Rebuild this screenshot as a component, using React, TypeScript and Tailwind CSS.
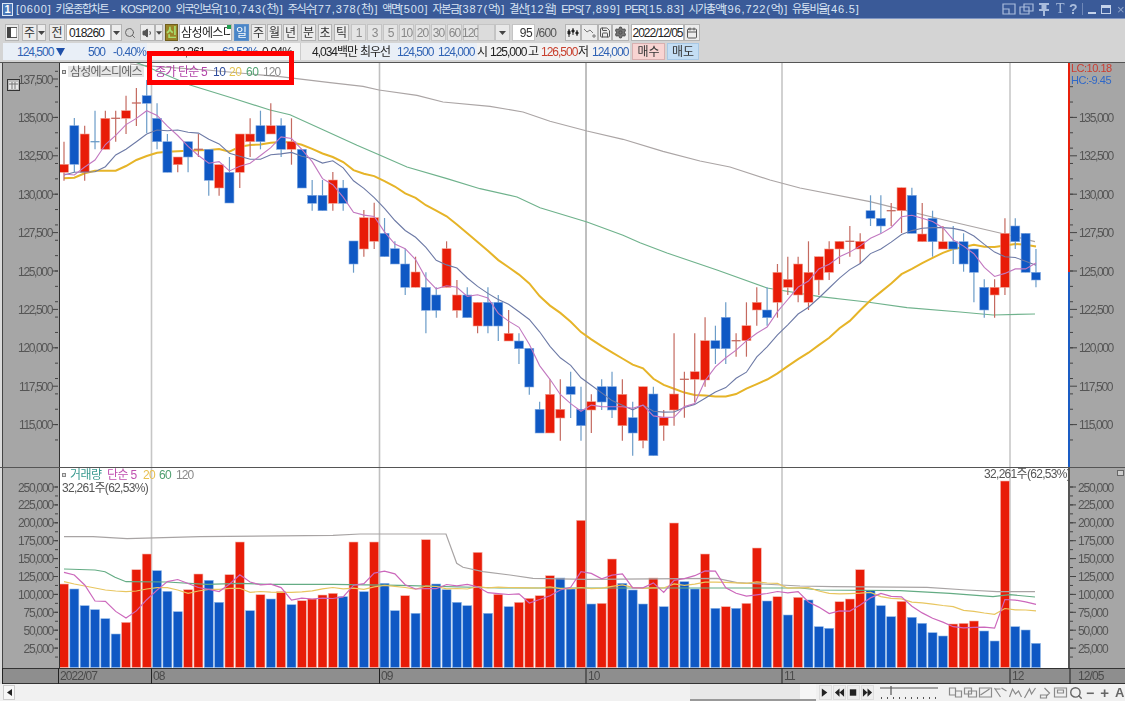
import React from "react";
import { Search, Save, Settings, Calendar, Volume1 } from "lucide-react";

type C = "r" | "b";
// colour, body top, body bottom, wick top, wick bottom (page pixels)
const candles: [C, number, number, number, number][] = [
  ["r",164.3,172.3,141.7,180.7],["b",125.7,164.3,118,172],["r",134,172.3,125.7,180.7],["b",141.7,141.7,110.7,149.3],["r",118.3,149.3,110.7,149.3],
  ["r",118.3,118.3,110.7,141.7],["r",110.7,118.3,95.7,134],["r",103,103,88,126],["b",95.7,103.3,80,133],["b",118.3,141.7,103.3,149.3],
  ["b",141.7,172.3,134,172.3],["r",157,164.7,157,172.3],["b",141.7,157,141.7,172.3],["r",149.3,149.3,134,157],["b",149.3,180.3,149.3,195.7],
  ["r",164.7,188,164.7,195.7],["b",172.3,203,157,203],["r",134,172.3,134,188],["r",134,141.7,118.3,157],["b",125.7,141.7,110.7,149.3],
  ["r",125.7,134,103.3,134],["b",125.7,149.3,118.3,157],["r",141.7,149.3,118.3,164.7],["b",149.3,188,149.3,188],["b",195.3,203.3,180,210.7],
  ["b",195.3,210.7,180,210.7],["r",180,203.3,172,210.7],["b",188,203.3,180,210.7],["b",241,264,241,272.7],["r",217.7,249,210,256.7],
  ["r",217.7,241.3,202.7,249],["b",233.3,256.7,218,256.7],["b",248.7,264,241.3,264],["b",264,287.3,248.7,295],["r",272,287.3,256.7,287.3],
  ["b",287.3,310.3,272.3,333.3],["b",295,310.3,287.3,317.7],["r",248.7,287.3,241.3,287.3],["r",295,310.3,280,317.7],["b",295,317.7,287.3,317.7],
  ["r",302.3,326,302.3,333.3],["b",302.3,326,287.3,333.3],["b",302.3,326,295,341],["r",333.3,341,310,341],["b",341,348.7,333.3,364],
  ["b",348.3,387,348.3,394.7],["b",409.3,433,401.7,433],["r",394.3,433,379.3,433],["r",409.3,418,379.3,440.7],["b",386.7,394.3,371.7,418],
  ["b",409.3,425.7,386.7,440.7],["r",401.7,410,394.3,433],["b",386.7,402,379.3,410],["b",386.7,410,371.7,418],["r",394.3,425.7,379.3,440.7],
  ["b",417.7,433,401.7,455.7],["r",386.7,440.7,386.7,448.3],["b",394,455.7,386.7,455.7],["r",417.3,425.7,410,440.7],["r",394,410,333.3,425.7],
  ["r",379.3,379.3,371.7,417.7],["r",371.7,379.3,333.3,402.3],["r",340.7,380,317.3,386.7],["b",340.7,348.7,325.7,364],["b",317.3,348.7,302.3,364],
  ["r",340.7,340.7,333.3,356.7],["r",325.7,340.7,302.3,356.7],["r",302.3,310,287.3,325.7],["b",310,317.7,287.3,325.7],["r",272.3,302.3,264,317.7],
  ["r",279.3,287.3,256.7,295],["r",264,295,256.7,302.3],["r",272.3,302.3,241.3,310],["r",256.7,280,256.7,295],["r",249,272.3,241.3,280],
  ["r",241.3,249,241.3,264],["r",241.3,241.3,226,256.7],["r",241.3,249,233.3,264],["b",210.7,218.3,195.3,226],["b",218.3,226,195.3,233.3],
  ["r",210.7,210.7,203,226],["r",187.7,210.7,187.7,233],["b",195.3,233.3,187.7,233.3],["r",234,241.7,203,241.7],["b",218.3,241.7,210.7,256.7],
  ["r",241.7,249,226,249],["b",241.7,249,226,264],["b",241.7,264,233.3,271.7],["b",249,272.3,249,302.3],["b",287.3,310,279.3,317.7],
  ["r",287.3,295,279.3,317.7],["r",233.3,287.3,218.3,295],["b",226,241.7,218.3,249],["b",233.3,272.3,233.3,272.3],["b",272.3,280,249,287.3],
];

const volume: [C, number][] = [
  ["r",584],["b",589],["b",605.7],["b",609.7],["b",618.7],["b",634],["r",622.3],["r",569.7],["r",554],["b",570.7],
  ["b",591.3],["b",611.7],["r",589.7],["r",574],["b",580.3],["b",602.3],["r",574.7],["r",542],["b",610.7],["r",594.7],
  ["b",599],["r",591.7],["b",604.7],["r",600.7],["r",599],["r",595],["r",593.3],["b",596.7],["r",542],["b",591.7],
  ["r",542],["b",583.3],["b",610.7],["r",595.7],["b",613.3],["r",539.7],["b",584],["b",589.7],["b",602.3],["b",605.7],
  ["r",552.3],["b",613.3],["r",594.3],["b",606.7],["r",602.3],["r",598.3],["r",595.7],["r",575.7],["b",578],["b",589],
  ["r",520.3],["b",604],["r",603.3],["r",559],["b",583.3],["b",590],["b",604],["r",578],["b",606.7],["r",523],
  ["b",581.7],["b",589],["r",554],["b",608.3],["r",606.7],["b",608.3],["r",603.3],["r",548],["b",601],["r",596.7],
  ["b",615],["r",597.3],["b",600],["b",626.7],["b",628.3],["r",601.7],["r",599],["r",569.7],["b",590.7],["b",605.7],
  ["b",616.7],["r",601.3],["b",617.3],["b",623.3],["b",632.7],["b",636],["r",624],["r",623.3],["r",621],["b",631],
  ["b",641],["r",481],["b",626.7],["b",630],["b",643.3],
];

const X = (i: number) => 64 + 10.34 * i;
const sma = (v: number[], n: number, early: number[]) =>
  v.map((_, i) => (i < n - 1 ? early[i] : v.slice(i - n + 1, i + 1).reduce((a, b) => a + b, 0) / n));
const line = (ys: number[]) => ys.map((y, i) => `${X(i).toFixed(1)},${y.toFixed(1)}`).join(" ");

const closes = candles.map((c) => (c[0] === "r" ? c[1] : c[2]));
const ma5 = sma(closes, 5, [174, 175, 167, 160]);
const ma10 = sma(closes, 10, [175, 172.3, 172, 171.7, 166.7, 155, 149.3, 141.7, 134]);
const ma20 = sma(closes, 20, [178.3,177.7,173.3,170.7,170.7,170.7,166,160,156,152.7,151.7,151.2,150.7,150.3,150,149,151.7,146.7,145]);
const ma60 = "135,62 147,66.7 190,85 233,98.3 270,110 290,114.7 323,129.7 357,145.3 379,154.7 407,167 447,178.7 480,188.7 517,197 540,207.7 587,222 623,235.3 640,242.7 667,253 717,270 767,288 820,296.7 867,302 907,307.7 960,312 993,315 1035,314";
const ma120 = "130,64 157,66.7 207,70 280,76.7 330,82.7 363,86.3 379,90 417,95.3 443,102 490,106.3 523,112 550,121.3 587,131 623,139.3 663,151.3 700,161 730,167 770,180 800,188 870,201.7 940,219 1000,233 1035,241.7";

const volTops = volume.map((v) => v[1]);
const v5 = sma(volTops, 5, [572.3, 575, 585, 601]);
const v20 = sma(volTops, 20, [581.7,584,586,588,590,591,591.7,591,589,587.7,587.7,590,593.3,591,589.3,589.3,588.3,588.3,592.3]);
const v60 = "64,569 95,570 105,571.7 115,577.3 126,581.7 167,582 207,584.3 240,583.3 267,584.3 333,584.3 400,585.3 500,588 800,588 820,590 900,590.7 950,593.3 993,596.7 1010,594.7 1035,597";
const v120 = "64,536.7 93,536.7 127,538.7 200,536.7 333,535.3 360,534 446,534 456.7,563.3 463,567.3 483,571.7 510,575 533,578.3 587,579.3 717,578.3 737,582.7 800,586 833,586.7 927,587.3 967,590 997,591.7 1035,591.7";

const grid: [number, string, number][] = [
  [151.5, "#c6c6c6", 1.6], [379.5, "#c0c0c0", 1.6], [586, "#808080", 1], [782, "#c6c6c6", 1.6], [1010, "#c8c8c8", 1.6],
];

const priceLabels = [137500,135000,132500,130000,127500,125000,122500,120000,117500,115000];
const py = (p: number) => 79 + ((137500 - p) / 2500) * 38.4;
const priceTicks = Array.from({ length: 26 }, (_, i) => py(139000 - i * 1000));
const volLabels = [250000,225000,200000,175000,150000,125000,100000,75000,50000,25000];
const vy = (v: number) => 487 + ((250000 - v) / 25000) * 17.9;
const fmt = (n: number) => n.toLocaleString("en-US");

const Box = ({ c, children }: { c: string; children?: React.ReactNode }) => (
  <div className={`flex items-center justify-center shrink-0 border text-[12px] leading-none ${c}`}>{children}</div>
);
const Btn = ({ c, children }: { c: string; children?: React.ReactNode }) => (
  <Box c={`border-[#b4b4b4] bg-[#ececec] text-[#333] ${c}`}>{children}</Box>
);
const Num = ({ c, children }: { c: string; children?: React.ReactNode }) => (
  <Box c={`border-[#c4c4c4] bg-[#e4e4e4] text-[#888] tracking-[-1px] ${c}`}>{children}</Box>
);
const Caret = () => (
  <svg width="7" height="4" viewBox="0 0 7 4"><path d="M0 0h7L3.500 4z" fill="#444" /></svg>
);
const T = ({ c, children }: { c: string; children?: React.ReactNode }) => (
  <span className={`shrink-0 text-[12px] whitespace-nowrap ${c}`}>{children}</span>
);

function Ico({ d }: { d: React.ReactNode }) {
  return (
    <svg width="14" height="14" viewBox="0 0 14 14" fill="none" stroke="#555" strokeWidth="1">
      {d}
    </svg>
  );
}

// The title text is set tight on Hangul and on capitals, as the terminal's bitmap face is.
const titleText = "[0600] 키움종합차트 - KOSPI200 외국인보유[10,743(천)] 주식수[77,378(천)] 액면[500] 자본금[387(억)] 결산[12월] EPS[7,899] PER[15.83] 시가총액[96,722(억)] 유통비율[46.5]";
const titleRuns = titleText.match(/[\uac00-\ud7a3]+|[A-Z]+|[^\uac00-\ud7a3A-Z]+/g) ?? [];
const runClass = (r: string) =>
  /[\uac00-\ud7a3]/.test(r) ? "tracking-[-1.35px]" : /[A-Z]/.test(r) ? "tracking-[-0.7px]" : "tracking-[0.85px]";

export default function App() {
  return (
    <div className="relative w-[1125px] h-[701px] overflow-hidden bg-[#d4d4d4]">
      <div className="flex flex-col w-[1125px] h-[701px] blur-[0.5px] font-['Liberation_Sans','Noto_Sans_CJK_KR',sans-serif]">
        {/* Title bar */}
        <div className="flex items-center h-[19px] shrink-0 bg-[#3a5a98] border-b border-[#7f95c2] text-[#dbe5f4]">
          <div className="ml-[2px] w-[11px] h-[13px] flex items-center justify-center border border-[#dfe8f6] bg-[#4a78b8] text-[11px] leading-none font-bold text-white">1</div>
          <div className="ml-[3px] w-[860px] text-[11px] leading-none whitespace-nowrap">
            {titleRuns.map((r, i) => <span key={i} className={runClass(r)}>{r}</span>)}
          </div>
          <div className="ml-auto flex items-center h-[18px] text-[#a9bcdc]">
            <svg width="15" height="12" viewBox="0 0 15 12" fill="none" stroke="#a9bcdc" strokeWidth="1.2"><path d="M1 1h12v10H1z M1 6h6v5" /></svg>
            <svg className="ml-[2px]" width="15" height="12" viewBox="0 0 15 12" fill="none" stroke="#a9bcdc" strokeWidth="1.2"><path d="M5 1h9v7H5z M1 4h9v7H1z" /></svg>
            <svg className="ml-[4px]" width="12" height="13" viewBox="0 0 12 13" fill="#a9bcdc"><path d="M1 0h10v2H8.500v4H11v2H7v5H5V8H1V6h2.500V2H1z" /></svg>
            <span className="ml-[6px] w-[10px] text-[14px] leading-none font-['Liberation_Serif',serif]">T</span>
            <span className="ml-[3px] w-[10px] text-[14px] leading-none font-bold">?</span>
            <span className="ml-[3px] w-px h-[12px] bg-[#6f88b8]" />
            <span className="ml-[5px] w-[8px] h-[2px] mt-[8px] bg-[#c4d2ea]" />
            <span className="ml-[5px] w-[10px] h-[9px] border border-t-[3px] border-[#c4d2ea]" />
            <span className="ml-[6px] w-[8px] text-[13px] leading-none text-[#8fa4c8]">×</span>
          </div>
        </div>

        {/* Toolbar */}
        <div className="h-[44px] shrink-0 border-b border-[#555] flex flex-col">
          <div className="flex h-[17px] mt-[5px] pl-[5px]">
            <Btn c="w-[14px]">
              <svg width="10" height="11" viewBox="0 0 10 11"><path d="M0 .500h10v10H0z" fill="#fff" stroke="#555" /><path d="M0 0h4v11H0z" fill="#444" /></svg>
            </Btn>
            <Btn c="ml-[3px] w-[15px]">주</Btn>
            <Btn c="w-[9px]"><Caret /></Btn>
            <Btn c="ml-[3px] w-[16px]">전</Btn>
            <Box c="ml-[1px] w-[45px] justify-start pl-[2px] border-[#b4b4b4] bg-white text-[#222] tracking-[-0.8px]">018260</Box>
            <Btn c="w-[11px]"><Caret /></Btn>
            <Box c="w-[16px] border-transparent text-[#666]"><Search size={12} /></Box>
            <Btn c="ml-[2px] w-[15px]"><Volume1 size={12} fill="#555" stroke="#555" /></Btn>
            <Btn c="w-[8px]"><Caret /></Btn>
            <Box c="ml-[2px] w-[13px] border-[#6e5d1c] bg-[#9a8428] text-[#a8e070] font-bold">신</Box>
            <div className="relative ml-[1px] w-[53px] shrink-0 flex items-center border border-[#b4b4b4] bg-white text-[12px] leading-none text-[#222] whitespace-nowrap overflow-hidden tracking-[-0.6px] pl-[1px]">
              삼성에스디
              <span className="absolute right-0 top-0 w-[4px] h-[4px] bg-[#20a050]" />
            </div>
            <Box c="ml-[2px] w-[15px] border-[#5b8ec8] bg-[#4a86c8] text-white">일</Box>
            <Btn c="ml-[2px] w-[15px]">주</Btn>
            <Btn c="ml-[1px] w-[15px]">월</Btn>
            <Btn c="ml-[1px] w-[15px]">년</Btn>
            <Btn c="ml-[3px] w-[15px]">분</Btn>
            <Btn c="ml-[2px] w-[14px]">초</Btn>
            <Btn c="ml-[2px] w-[15px]">틱</Btn>
            <Num c="ml-[2px] w-[15px]">1</Num>
            <Num c="ml-[1px] w-[15px]">3</Num>
            <Num c="ml-[1px] w-[15px]">5</Num>
            <Num c="ml-[1px] w-[15px]">10</Num>
            <Num c="ml-[1px] w-[15px]">20</Num>
            <Num c="ml-[1px] w-[15px]">30</Num>
            <Num c="ml-[1px] w-[15px]">60</Num>
            <Num c="ml-[1px] w-[15px]">120</Num>
            <Box c="w-[17px] border-[#c4c4c4] bg-[#dcdcdc]" />
            <Box c="w-[15px] border-[#c4c4c4] bg-[#e8e8e8]"><Caret /></Box>
            <Box c="ml-[2px] w-[23px] justify-end pr-[2px] border-[#c4c4c4] bg-white text-[#333] tracking-[-0.6px]">95</Box>
            <span className="ml-[1px] w-[21px] shrink-0 self-center text-[12px] leading-none text-[#555] tracking-[-0.8px]">/600</span>
            <Btn c="ml-[8px] w-[16px]">
              <Ico d={<><path d="M3 3v8M7 2v7M11 4v6" stroke="#222" /><path d="M2 5h2v3H2zM6 4h2v2H6zM10 6h2v2h-2z" fill="#222" stroke="#222" /></>} />
            </Btn>
            <Btn c="w-[17px]">
              <Ico d={<path d="M1 3l3 3 3-2 3 3M9 10h4M11 8v4" stroke="#777" />} />
            </Btn>
            <Btn c="w-[14px]"><Save size={13} color="#555" /></Btn>
            <Btn c="w-[17px]"><Settings size={13} color="#555" fill="#777" /></Btn>
            <Box c="ml-[2px] w-[53px] border-[#b4b4b4] bg-white text-[#222] tracking-[-1px]">2022/12/05</Box>
            <Btn c="w-[16px]"><Calendar size={12} color="#555" /></Btn>
          </div>
          <div className="flex items-center h-[17px] mt-[2px]">
            <div className="flex items-center h-full w-[144px] ml-[3px] bg-[#e9eff7] shrink-0">
              <T c="ml-[14px] w-[36px] text-[#2f62b4] tracking-[-1px]">124,500</T>
              <svg className="ml-[3px]" width="9" height="9" viewBox="0 0 9 9"><path d="M0 1h9L4.500 9z" fill="#1f4fa8" /></svg>
              <T c="ml-[22px] w-[18px] text-[#2f62b4] tracking-[-1px] text-right">500</T>
              <T c="ml-[8px] w-[32px] text-[#2f62b4] tracking-[-0.8px] text-right">-0.40%</T>
            </div>
            <div className="flex items-center h-full w-[153px] bg-[#f3f3f3] shrink-0">
              <T c="ml-[26px] w-[31px] text-[#222] tracking-[-0.8px] text-right">32,261</T>
              <T c="ml-[18px] w-[32px] text-[#2f62b4] tracking-[-0.8px] text-right">62.53%</T>
              <T c="ml-[8px] w-[28px] text-[#222] tracking-[-0.8px] text-right">0.04%</T>
            </div>
            <div className="flex items-center h-full w-[60px] bg-[#ececec] shrink-0 border-l border-[#ccc]">
              <T c="ml-[11px] text-[#222] tracking-[-1px]">4,034백만</T>
            </div>
            <div className="flex items-center h-full w-[117px] bg-[#e9eff7] shrink-0">
              <T c="w-[32px] text-[#222] tracking-[-1px]">최우선</T>
              <T c="ml-[5px] w-[36px] text-[#2f62b4] tracking-[-1px]">124,500</T>
              <T c="ml-[5px] w-[36px] text-[#2f62b4] tracking-[-1px]">124,000</T>
            </div>
            <div className="flex items-center h-full w-[153px] bg-[#f2f2f2] shrink-0">
              <T c="w-[13px] text-[#222]">시</T>
              <T c="w-[38px] text-[#222] tracking-[-1px]">125,000</T>
              <T c="w-[13px] text-[#222]">고</T>
              <T c="w-[37px] text-[#c8402e] tracking-[-1px]">126,500</T>
              <T c="w-[14px] text-[#222]">저</T>
              <T c="w-[34px] text-[#2f62b4] tracking-[-1px]">124,000</T>
            </div>
            <Box c="ml-[2px] w-[33px] h-[17px] border-[#d8b0b0] bg-[#f8d4d2] text-[#333]">매수</Box>
            <Box c="ml-[2px] w-[32px] h-[17px] border-[#a8c8e4] bg-[#c4def4] text-[#333]">매도</Box>
          </div>
        </div>

        {/* Price panel */}
        <div className="flex h-[404px] shrink-0 pl-[2px] bg-[#dcdcdc]">
          <div className="relative w-[57px] shrink-0 border-l border-[#444] bg-[#a6a6a6]">
            <svg width="56" height="404" viewBox="3 63 56 404" className="block">
              {priceTicks.filter((y) => y > 63).map((y, i) => <line key={i} x1="55" x2="58" y1={y} y2={y} stroke="#444" />)}
              {priceLabels.map((p) => (
                <g key={p}>
                  <line x1="52" x2="58" y1={py(p)} y2={py(p)} stroke="#444" />
                  <text x="52" y={py(p) + 4.5} textAnchor="end" className="text-[12px] tracking-[-1.35px] fill-[#555]">{fmt(p)}</text>
                </g>
              ))}
            </svg>
            <div className="absolute left-[4px] top-[16px] w-[13px] h-[12px] border border-[#333] bg-[#bdbdbd] flex items-center justify-center">
              <svg width="9" height="7" viewBox="0 0 9 7"><path d="M0 0h9v7H0z" fill="#e8e8e8" /><path d="M3 0v7M6 0v7M0 2h9" stroke="#777" /></svg>
            </div>
          </div>
          <div className="relative w-[1009px] shrink-0 bg-white border-l border-[#333]">
            <svg width="1008" height="404" viewBox="60 63 1008 404" className="block">
              {grid.map(([x, col, w]) => <line key={x} x1={x} x2={x} y1="63" y2="467" stroke={col} strokeWidth={w} />)}
              <polyline points={ma120} fill="none" stroke="#aba5a5" strokeWidth="1.2" />
              <polyline points={ma60} fill="none" stroke="#6fb28c" strokeWidth="1.2" />
              <polyline points={line(ma20)} fill="none" stroke="#e6b428" strokeWidth="2" />
              {candles.map(([c, t, b, wt, wb], i) => {
                const x = X(i);
                const wick = c === "r" ? "#c46a60" : "#6b9cc8";
                const fill = c === "r" ? "#e81c08" : "#0f58c4";
                return (
                  <g key={i}>
                    <line x1={x} x2={x} y1={wt} y2={wb} stroke={wick} strokeWidth="1.2" />
                    {t === b ? (
                      <line x1={x - 4.5} x2={x + 4.5} y1={t} y2={t} stroke={wick} strokeWidth="1.3" />
                    ) : (
                      <rect x={x - 4.5} y={t} width="9" height={b - t} fill={fill} stroke={c === "r" ? "#f0a090" : "#80a8e0"} strokeWidth="0.6" />
                    )}
                  </g>
                );
              })}
              <polyline points={line(ma10)} fill="none" stroke="#6d7aa6" strokeWidth="1.1" />
              <polyline points={line(ma5)} fill="none" stroke="#c278c0" strokeWidth="1.1" />
            </svg>
            <div className="absolute left-[2px] top-[3px] flex items-center h-[11px] text-[12px] leading-none whitespace-nowrap">
              <span className="w-[4px] h-[4px] border border-[#777] bg-[#ddd]" />
              <span className="ml-[2px] w-[76px] h-[11px] flex items-center bg-[#e6e6e6] text-[#666] tracking-[-0.8px] pl-[2px]">삼성에스디에스</span>
              <span className="ml-[11px] w-[58px] text-[#b244a8] tracking-[-0.8px]">종가 단순 5</span>
              <span className="w-[16px] text-[#2f4d9c] tracking-[-0.5px]">10</span>
              <span className="w-[17px] text-[#e4c452] tracking-[-0.5px]">20</span>
              <span className="w-[17px] text-[#52a272] tracking-[-0.5px]">60</span>
              <span className="w-[18px] text-[#8a8a8a] tracking-[-0.9px]">120</span>
            </div>
          </div>
          <div className="relative w-[57px] shrink-0 bg-[#a6a6a6]">
            <svg width="57" height="404" viewBox="1068 63 57 404" className="block">
              <rect x="1068" y="63" width="2" height="209" fill="#e8200c" />
              <rect x="1068" y="272" width="2" height="195" fill="#1a5cc4" />
              {priceTicks.filter((y) => y > 86).map((y, i) => <line key={i} x1="1070" x2="1073" y1={y} y2={y} stroke="#444" />)}
              {priceLabels.slice(1).map((p) => (
                <g key={p}>
                  <line x1="1070" x2="1077" y1={py(p)} y2={py(p)} stroke="#444" />
                  <text x="1079" y={py(p) + 4.5} className="text-[12px] tracking-[-1.35px] fill-[#555]">{fmt(p)}</text>
                </g>
              ))}
              <text x="1071" y="72" className="text-[11px] tracking-[-0.5px] fill-[#cc3c30]">LC:10.18</text>
              <text x="1071" y="84" className="text-[11px] tracking-[-0.5px] fill-[#2f68c8]">HC:-9.45</text>
            </svg>
          </div>
        </div>
        <div className="h-px shrink-0 bg-[#555]" />

        {/* Volume panel */}
        <div className="flex h-[200px] shrink-0 pl-[2px] bg-[#dcdcdc]">
          <div className="w-[57px] shrink-0 border-l border-[#444] bg-[#a6a6a6]">
            <svg width="56" height="200" viewBox="3 468 56 200" className="block">
              {[...volLabels.map(vy), ...volLabels.map((v) => vy(v) + 8.95)].map((y, i) => <line key={i} x1="55" x2="58" y1={y} y2={y} stroke="#444" />)}
              {volLabels.map((v) => (
                <g key={v}>
                  <line x1="53" x2="58" y1={vy(v)} y2={vy(v)} stroke="#444" />
                  <text x="53" y={vy(v) + 4.5} textAnchor="end" className="text-[12px] tracking-[-1.2px] fill-[#555]">{fmt(v)}</text>
                </g>
              ))}
            </svg>
          </div>
          <div className="relative w-[1009px] shrink-0 bg-white border-l border-[#333]">
            <svg width="1008" height="200" viewBox="60 468 1008 200" className="block">
              {grid.map(([x, col, w]) => <line key={x} x1={x} x2={x} y1="468" y2="668" stroke={col} strokeWidth={w} />)}
              {volume.map(([c, t], i) => (
                <rect key={i} x={X(i) - 4.5} y={t} width="9" height={667.5 - t} fill={c === "r" ? "#e81c08" : "#0f58c4"} stroke={c === "r" ? "#f4b8b0" : "#90b8e8"} strokeWidth="0.6" />
              ))}
              <polyline points={v120} fill="none" stroke="#a8a4a4" strokeWidth="1.2" />
              <polyline points={v60} fill="none" stroke="#64ac84" strokeWidth="1.2" />
              <polyline points={line(v20)} fill="none" stroke="#e8c660" strokeWidth="1.2" />
              <polyline points={line(v5)} fill="none" stroke="#cc68bc" strokeWidth="1.2" />
            </svg>
            <div className="absolute left-[2px] top-[1px] text-[12px] leading-none whitespace-nowrap">
              <div className="flex items-center h-[12px]">
                <span className="w-[4px] h-[4px] border border-[#888] bg-[#ddd]" />
                <span className="ml-[4px] w-[37px] text-[#3a9a90] tracking-[-0.6px]">거래량</span>
                <span className="w-[36px] text-[#c050b0] tracking-[-0.6px]">단순 5</span>
                <span className="w-[16px] text-[#e8c050] tracking-[-0.7px]">20</span>
                <span className="w-[17px] text-[#4f9f70] tracking-[-0.7px]">60</span>
                <span className="text-[#8a8a8a] tracking-[-0.9px]">120</span>
              </div>
              <div className="mt-[1px] text-[#555] tracking-[-0.7px]">32,261주(62,53%)</div>
            </div>
            <div className="absolute right-[-2px] top-[0px] text-[12px] leading-none text-[#555] tracking-[-0.7px] whitespace-nowrap">32,261주(62,53%)</div>
          </div>
          <div className="relative w-[57px] shrink-0 bg-[#a6a6a6] border-l-2 border-[#555]">
            <svg width="55" height="200" viewBox="1070 468 55 200" className="block">
              {[...volLabels.map(vy), ...volLabels.map((v) => vy(v) + 8.95)].map((y, i) => <line key={i} x1="1070" x2="1073" y1={y} y2={y} stroke="#444" />)}
              {volLabels.map((v) => (
                <g key={v}>
                  <line x1="1070" x2="1076" y1={vy(v)} y2={vy(v)} stroke="#444" />
                  <text x="1078" y={vy(v) + 4.5} className="text-[12px] tracking-[-1.2px] fill-[#555]">{fmt(v)}</text>
                </g>
              ))}
            </svg>
            <span className="absolute left-[47px] top-[2px] w-[7px] h-[6px] border border-[#666] bg-[#ccc]" />
          </div>
        </div>

        {/* Date axis */}
        <div className="h-[16px] shrink-0 pl-[2px] bg-[#dcdcdc]">
          <svg width="1123" height="16" viewBox="2 668 1123 16" className="block bg-[#8e8e8e]">
            <line x1="2" x2="1125" y1="668.500" y2="668.500" stroke="#333" />
            <line x1="2" x2="1125" y1="683.500" y2="683.500" stroke="#333" />
            {[2.5, 58.5, 151.5, 379.5, 586, 782, 1010, 1070].map((x) => <line key={x} x1={x} x2={x} y1="668" y2="684" stroke="#222" />)}
            {[["2022/07", 60], ["08", 153], ["09", 381], ["10", 588], ["11", 784], ["12", 1012], ["12/05", 1078]].map(([t, x]) => (
              <text key={String(t)} x={x} y="680" className="text-[12px] tracking-[-0.9px] fill-[#4a4a4a]">{t}</text>
            ))}
          </svg>
        </div>

        {/* Bottom bar */}
        <div className="flex items-center h-[17px] shrink-0 bg-[#f1f1f1]">
          <Box c="ml-[3px] w-[12px] h-[15px] border-[#ccc] bg-[#f7f7f7] text-[#222]"><svg width="5" height="7" viewBox="0 0 5 7"><path d="M5 0v7L0 3.500z" fill="#222" /></svg></Box>
          <div className="ml-[675px] w-[126px] h-[17px] shrink-0 bg-[#e8e8e8] border-b-2 border-[#999] flex justify-end"><span className="w-[16px] h-[15px] bg-[#f6f6f6]" /></div>
          <div className="flex items-center ml-[3px] gap-[1px]">
            {["M2 1l6 4.500-6 4.500z", "M6 1v9L1 5.500zM11 1v9L6 5.500z", "M2 2h7v7H2z", "M1 1l5 4.500-5 4.500zM6 1l5 4.500-5 4.500z"].map((d) => (
              <span key={d} className="w-[13px] h-[15px] flex items-center justify-center bg-[#ededed] border border-[#ddd]">
                <svg width="11" height="11" viewBox="0 0 12 11"><path d={d} fill="#222" /></svg>
              </span>
            ))}
          </div>
          <svg className="ml-[6px] shrink-0" width="60" height="15" viewBox="0 0 60 15">
            <path d="M0 3h58M11 1v9" stroke="#555" strokeWidth="1.200" fill="none" />
            <path d="M1 13h58" stroke="#555" strokeDasharray="1 5" strokeWidth="2" />
          </svg>
          <div className="flex items-center ml-[8px] text-[#888]">
            {[
              "M1 2h6v7H1zM7 5h6v6H7z", "M1 2h7v6H1zM5 5h8v6H5z", "M1 2h12v9H1z M2 9l9-6", "M1 2l6 9 M1 3h6 M8 2l5 3",
              "M1 11l3-8 3 5 3-3 3 6", "M1 12l5-9 2 5 4-6", "M2 9h6v3H2zM6 2l5 5-3 3", "M1 2h12v9H1zM4 4h6v3H4z",
            ].map((d) => (
              <svg key={d} width="15" height="14" viewBox="0 0 14 14" fill="none" stroke="#8a8a8a" strokeWidth="1.200"><path d={d} /></svg>
            ))}
          </div>
          <Search className="ml-[1px] shrink-0" size={14} color="#666" strokeWidth={2.4} />
          <span className="ml-[3px] text-[14px] leading-none font-bold text-[#666]">−</span>
          <span className="ml-[6px] text-[15px] leading-none font-bold text-[#666]">+</span>
          <span className="ml-[6px] text-[13px] leading-none font-bold text-[#666]">A</span>
        </div>
      </div>
      {/* Red annotation box drawn over the screenshot */}
      <div className="absolute left-[147px] top-[51px] w-[147px] h-[34px] border-[5px] border-[#ff0000]" />
    </div>
  );
}
